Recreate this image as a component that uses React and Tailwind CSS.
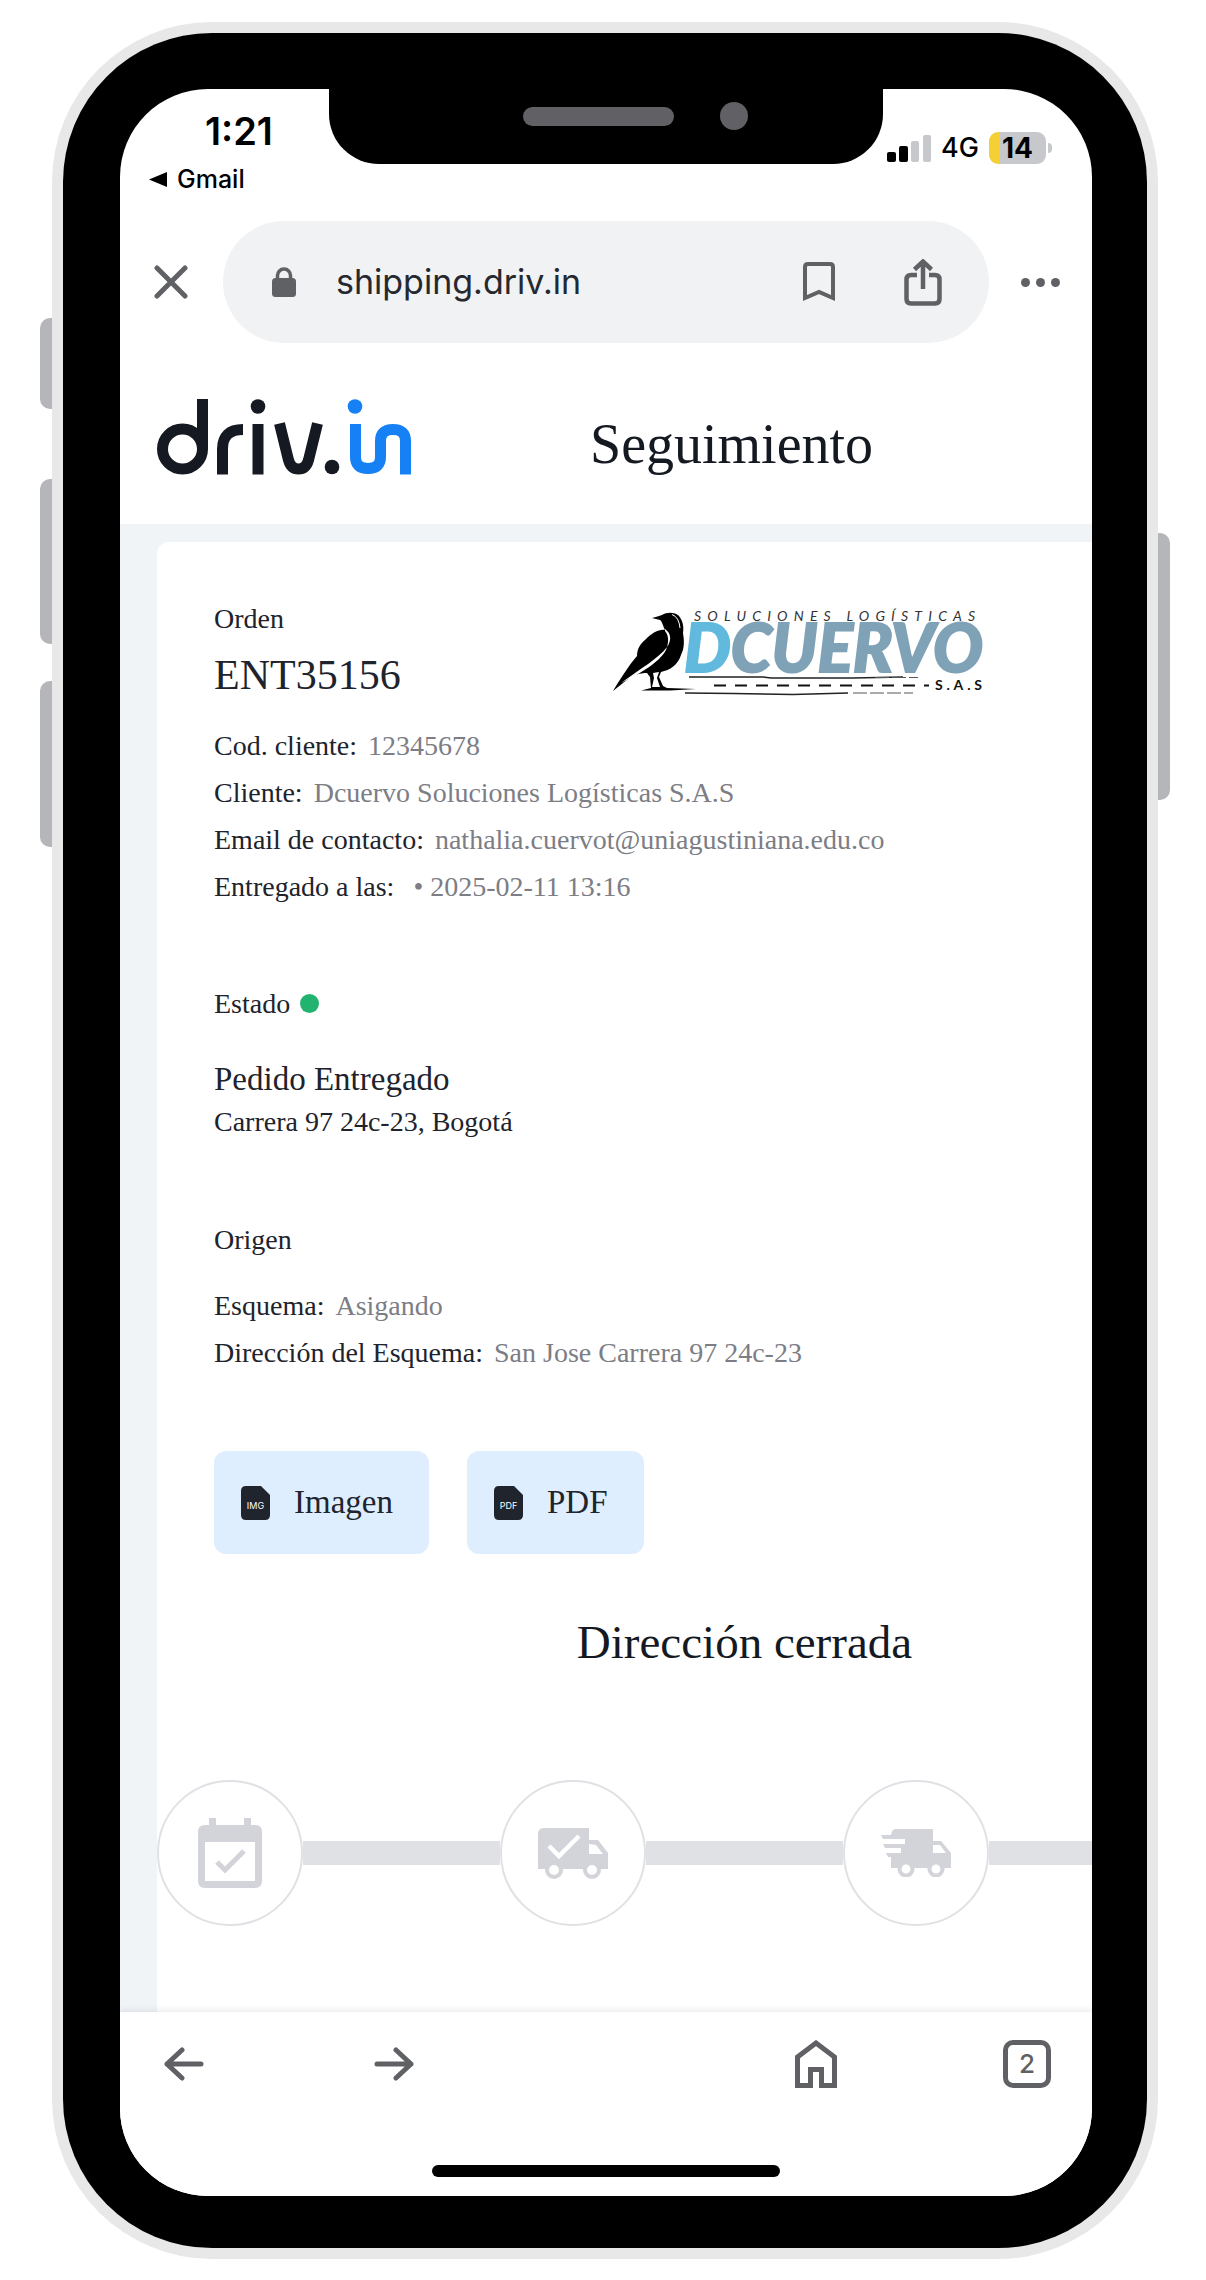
const dark = '#151922';

function BrandLogo() {
  return (
    <svg viewBox="0 0 254 76" className="h-[76px] w-[254px] shrink-0" role="img" aria-label="driv.in" fill="none">
      <g stroke={dark} strokeWidth="11">
        <circle cx="25.5" cy="50" r="20" />
        <path d="M45.5 0V50" />
        <path d="M65.500 75.500V50Q65.500 30.500 86 30.500" />
        <path d="M101 25V75.500" />
        <path d="M122.500 24.500 131.500 61Q134 70 141.500 70T151.500 61L160.500 24.500" />
      </g>
      <circle cx="101" cy="7.500" r="7.300" fill={dark} />
      <circle cx="175" cy="68" r="7.300" fill={dark} />
      <circle cx="198" cy="7.500" r="7.300" fill="#1680f5" />
      <path d="M198.500 25V58Q198.500 69.500 211 69.500T223.500 58V42Q223.500 30.500 236 30.500T248.500 42V75.500" stroke="#1680f5" strokeWidth="11" />
    </svg>
  );
}

function ClientLogo() {
  return (
    <svg viewBox="0 -9 374 98" className="h-[98px] w-[374px] shrink-0 overflow-visible" role="img" aria-label="Soluciones Logísticas DCuervo S.A.S">
      <path
        d="M39 6C43 5 46 4 49 3C54 0 62 0 66 4C70 9 71 15 70 21C71 28 72 35 68 43C65 53 57 58 48 60L46 65L50 74L54 76L83 77L57 78.500H28L38 76L37 65L34 61C27 61 20 63 15 67L0 79C6 69 16 53 24 44C24 37 27 32 33 27C39 21 46 17 52 18C50 14 49 9 47 8Z"
        fill="#000"
      />
      <path d="M52 17C58 21 59 28 54 35C46 46 27 57 8 71C26 62 46 51 53 38C55 33 57 25 52 19Z" fill="#fff" />
      <path d="M40 61L41 66L39 75H47L44 66L46 60Z" fill="#fff" />
      <path d="M59 2.500Q66 5 67 16" stroke="#fff" strokeWidth="1" fill="none" />
      <path d="M76 65H150L158 66H240L290 65M72 81L120 81.500L180 82.500L235 81" stroke="#222" strokeWidth="1.500" fill="none" />
      <path d="M240 81H300M262 65.500H305" stroke="#555" strokeWidth="1" strokeDasharray="14 3" fill="none" />
      <path d="M101 73.500H316" stroke="#111" strokeWidth="2" strokeDasharray="12 9" fill="none" />
      <text x="81" y="9" fontSize="14" fontStyle="italic" letterSpacing="6.200" fill="#333" fontFamily="Lato, sans-serif">SOLUCIONES LOGÍSTICAS</text>
      <text x="71" y="60" fontSize="66" fontWeight="900" fontStyle="italic" fill="#7fa2b7" stroke="#7fa2b7" strokeWidth="2" fontFamily="Lato, sans-serif"><tspan fill="#62b9de" stroke="#62b9de">D</tspan>CUERVO</text>
      <text x="322" y="78" fontSize="14" fontWeight="700" letterSpacing="3.800" fill="#111" fontFamily="Lato, sans-serif">S.A.S</text>
    </svg>
  );
}

function FileIcon({ label }) {
  return (
    <svg viewBox="0 0 29 34" className="h-[34px] w-[29px] shrink-0" aria-hidden="true">
      <path d="M5 0H20L29 9V29Q29 34 24 34H5Q0 34 0 29V5Q0 0 5 0Z" fill="#20242d" />
      <text x="14.500" y="22.500" textAnchor="middle" fontSize="9" fill="#fff" fontFamily="Inter, sans-serif">{label}</text>
    </svg>
  );
}

function CalendarIcon() {
  return (
    <svg viewBox="0 0 64 70" className="h-[70px] w-16" aria-hidden="true">
      <path fillRule="evenodd" fill="#d3d4d9" d="M11 0H18V7H46V0H53V7H57Q64 7 64 14V63Q64 70 57 70H7Q0 70 0 63V14Q0 7 7 7H11ZM7 24V63H57V24Z" />
      <path d="M19 44L27 52L46 33" fill="none" stroke="#d3d4d9" strokeWidth="5" />
    </svg>
  );
}

function TruckCheckIcon() {
  return (
    <svg viewBox="0 0 70 51" className="h-[51px] w-[70px]" aria-hidden="true">
      <path fillRule="evenodd" fill="#d3d4d9" d="M6 0H51V12H60L70 25V41H0V6Q0 0 6 0ZM51 16V26H65L58 17Z" />
      <path d="M11 18L21 28L41 8" fill="none" stroke="#fff" strokeWidth="4.500" />
      <circle cx="16" cy="42" r="7" fill="#fff" stroke="#d3d4d9" strokeWidth="4" />
      <circle cx="54" cy="42" r="7" fill="#fff" stroke="#d3d4d9" strokeWidth="4" />
    </svg>
  );
}

function TruckFastIcon() {
  return (
    <svg viewBox="0 0 70 48" className="h-12 w-[70px]" aria-hidden="true">
      <path fillRule="evenodd" fill="#d3d4d9" d="M14 0H52V12H60L70 24V39H10V28H7L5 24H20V19H4L2 15H24V10H2L0 6H10Q11 0 14 0ZM52 16V24H65L59 16Z" />
      <circle cx="25" cy="40" r="6.500" fill="#fff" stroke="#d3d4d9" strokeWidth="4" />
      <circle cx="55" cy="40" r="6.500" fill="#fff" stroke="#d3d4d9" strokeWidth="4" />
    </svg>
  );
}

function StatusBar() {
  return (
    <div className="flex h-[132px] items-start justify-between pl-[29px] pr-10 text-black">
      <div className="flex flex-col pt-[22px]">
        <span className="pl-14 text-[38px] leading-10 font-semibold">1:21</span>
        <button type="button" className="mt-3 flex items-center gap-2.5 text-left text-[25px] leading-8 font-medium">
          <svg viewBox="0 0 18 15" className="h-[15px] w-[18px]" aria-hidden="true"><path d="M0 7.500 18 0V15Z" /></svg>
          Gmail
        </button>
      </div>
      <div className="flex items-center gap-2.5 pt-[43px]">
        <svg viewBox="0 0 44 27" className="h-[27px] w-11" aria-hidden="true">
          <rect x="0" y="17" width="9" height="10" rx="2" />
          <rect x="12" y="11" width="9" height="16" rx="2" />
          <rect x="24" y="6" width="8" height="21" rx="2" fill="#c7c8cc" />
          <rect x="36" y="0" width="8" height="27" rx="2" fill="#c7c8cc" />
        </svg>
        <span className="text-[27px] leading-8 font-medium">4G</span>
        <div className="flex items-center gap-0.5">
          <div className="flex h-8 w-[57px] items-center justify-center overflow-hidden rounded-[9px] bg-linear-to-r from-[#f5cf36] from-18% to-[#c7c8cc] to-18% text-[28px] leading-8 font-bold">14</div>
          <div className="h-2.5 w-1 rounded-r-full bg-[#c7c8cc]" />
        </div>
      </div>
    </div>
  );
}

function BrowserBar() {
  return (
    <div className="flex h-[122px] items-center gap-8 pr-8 pl-[34px] text-[#606165]">
      <button type="button" aria-label="Cerrar" className="shrink-0">
        <svg viewBox="0 0 34 34" className="size-[34px]" fill="none" stroke="currentColor" strokeWidth="5" strokeLinecap="round"><path d="M3 3 31 31M31 3 3 31" /></svg>
      </button>
      <div className="ml-[3px] flex h-full min-w-0 flex-1 items-center rounded-full bg-[#f1f2f4] pr-[47px] pl-12">
        <svg viewBox="0 0 26 30" className="h-[30px] w-[26px] shrink-0" aria-hidden="true">
          <path d="M6.500 13V8.500a6.500 6.500 0 0 1 13 0V13" fill="none" stroke="currentColor" strokeWidth="3.500" />
          <rect x="1" y="11" width="24" height="19" rx="3.500" fill="currentColor" />
        </svg>
        <input type="text" aria-label="Dirección" readOnly value="shipping.driv.in" className="ml-[39px] min-w-0 flex-1 bg-transparent text-[34px] leading-10 text-[#26282f] outline-none" />
        <button type="button" aria-label="Guardar marcador" className="mr-[69px] shrink-0">
          <svg viewBox="0 0 32 40" className="h-10 w-8" fill="none" stroke="currentColor" strokeWidth="4"><path d="M2 36V5Q2 2 5 2H27Q30 2 30 5V36L16 30Z" /></svg>
        </button>
        <button type="button" aria-label="Compartir" className="shrink-0">
          <svg viewBox="0 0 38 47" className="h-[47px] w-[38px]" fill="none" stroke="currentColor" strokeWidth="4.500"><path d="M13 16H7Q2.500 16 2.500 20.500V40Q2.500 44.500 7 44.500H31Q35.500 44.500 35.500 40V20.500Q35.500 16 31 16H25M19 30V3M10.500 10.500 19 2.500 27.500 10.500" /></svg>
        </button>
      </div>
      <button type="button" aria-label="Más opciones" className="flex shrink-0 gap-1.5">
        <span className="size-[9px] rounded-full bg-current" />
        <span className="size-[9px] rounded-full bg-current" />
        <span className="size-[9px] rounded-full bg-current" />
      </button>
    </div>
  );
}

function Field({ label, children }) {
  return (
    <div className="flex gap-[11px] whitespace-nowrap">
      <dt>{label}</dt>
      <dd className="text-[#7c7d85]">{children}</dd>
    </div>
  );
}

function FileButton({ icon, children }) {
  return (
    <button type="button" className="flex h-[103px] items-center gap-6 rounded-xl bg-[#dfeefe] pr-9 pl-[27px] text-[33px] text-[#20242d]">
      <FileIcon label={icon} />
      {children}
    </button>
  );
}

function Step({ label, children }) {
  return (
    <li className="flex shrink-0 items-center">
      <div role="img" aria-label={label} className="flex size-[146px] items-center justify-center rounded-full border-2 border-[#e0e1e5] bg-white">{children}</div>
      <div className="h-6 w-[197px] bg-[#e0e1e5]" />
    </li>
  );
}

function OrderCard() {
  return (
    <div className="min-w-0 flex-1 rounded-tl-xl bg-white">
      <section className="px-[57px] pt-[61px] text-[28px] leading-[47px] text-[#20232c]">
        <div className="flex h-24 justify-between pr-12">
          <div>
            <h2 className="leading-8">Orden</h2>
            <p className="mt-4 text-[42px] leading-12">ENT35156</p>
          </div>
          <ClientLogo />
        </div>
        <dl className="mt-[23px]">
          <Field label="Cod. cliente:">12345678</Field>
          <Field label="Cliente:">Dcuervo Soluciones Logísticas S.A.S</Field>
          <Field label="Email de contacto:">nathalia.cuervot@uniagustiniana.edu.co</Field>
          <Field label="Entregado a las:"><span className="pl-2">• 2025-02-11 13:16</span></Field>
        </dl>

        <h3 className="mt-[70px] flex items-center gap-2.5">
          Estado
          <span className="size-[19px] rounded-full bg-[#23b371]" />
        </h3>
        <p className="mt-7 text-[33px] leading-12">Pedido Entregado</p>
        <p className="leading-[38px]">Carrera 97 24c-23, Bogotá</p>

        <h3 className="mt-[75px]">Origen</h3>
        <dl className="mt-[19px]">
          <Field label="Esquema:">Asigando</Field>
          <Field label="Dirección del Esquema:">San Jose Carrera 97 24c-23</Field>
        </dl>

        <div className="mt-[75px] flex gap-[38px]">
          <FileButton icon="IMG">Imagen</FileButton>
          <FileButton icon="PDF">PDF</FileButton>
        </div>
      </section>

      <h2 className="mt-[60px] pl-60 text-center text-[47px] leading-14 text-[#151922]">Dirección cerrada</h2>

      <ol className="mt-[110px] flex overflow-hidden">
        <Step label="Programado"><CalendarIcon /></Step>
        <Step label="Asignado"><TruckCheckIcon /></Step>
        <Step label="En camino"><TruckFastIcon /></Step>
      </ol>
    </div>
  );
}

function BottomBar() {
  return (
    <footer className="relative bg-white shadow-[0_-3px_5px_rgba(20,30,50,0.07)]">
      <nav className="flex items-center pt-7 pr-[41px] pl-11 text-[#606165]" aria-label="Navegador">
        <button type="button" aria-label="Atrás">
          <svg viewBox="0 0 40 34" className="h-[34px] w-10" fill="none" stroke="currentColor" strokeWidth="5" strokeLinecap="round" strokeLinejoin="round"><path d="M37 17H3M18 3 3 17 18 31" /></svg>
        </button>
        <button type="button" aria-label="Adelante" className="ml-[170px]">
          <svg viewBox="0 0 40 34" className="h-[34px] w-10" fill="none" stroke="currentColor" strokeWidth="5" strokeLinecap="round" strokeLinejoin="round"><path d="M3 17H37M22 3 37 17 22 31" /></svg>
        </button>
        <button type="button" aria-label="Inicio" className="ml-auto">
          <svg viewBox="0 0 42 48" className="h-12 w-[42px]" fill="none" stroke="currentColor" strokeWidth="5"><path d="M2.500 45.500V17L21 3L39.500 17V45.500H26.500V29.500H15.500V45.500Z" /></svg>
        </button>
        <button type="button" aria-label="2 pestañas" className="ml-[166px] flex size-12 items-center justify-center rounded-[10px] border-[5px] border-current text-[26px] leading-8 font-medium">2</button>
      </nav>
      <div className="mx-auto mt-[77px] mb-[19px] h-3 w-[348px] rounded-full bg-black" />
    </footer>
  );
}

export default function App() {
  return (
    <div className="bg-white pt-[22px] pr-9 pb-[21px] pl-10 font-['Inter',sans-serif]">
      <div className="relative px-3">
        <div className="absolute top-[296px] left-0 h-[91px] w-3 rounded-l-[10px] bg-[#b5b6b9]" />
        <div className="absolute top-[457px] left-0 h-[165px] w-3 rounded-l-[10px] bg-[#b5b6b9]" />
        <div className="absolute top-[659px] left-0 h-[166px] w-3 rounded-l-[10px] bg-[#b5b6b9]" />
        <div className="absolute top-[511px] right-0 h-[267px] w-3 rounded-r-[10px] bg-[#b5b6b9]" />

        <div className="rounded-[160px] bg-[#e8e8e8] p-[11px]">
          <div className="rounded-[149px] bg-black pt-14 pr-[55px] pb-[52px] pl-[57px]">
            <main className="relative flex min-h-[2107px] flex-col overflow-hidden rounded-[88px] bg-white">
              <div className="absolute top-0 left-1/2 flex h-[75px] w-[554px] -translate-x-1/2 items-start rounded-b-[50px] bg-black pt-[13px] pl-[194px]">
                <div className="mt-[5px] h-[19px] w-[151px] rounded-full bg-[#616165]" />
                <div className="ml-[46px] size-7 rounded-full bg-[#616165]" />
              </div>
              <StatusBar />
              <BrowserBar />
              <div className="flex flex-1 flex-col font-['Liberation_Serif',serif]">
                <header className="flex items-center pt-[49px] pb-[42px] pl-[37px]">
                  <BrandLogo />
                  <h1 className="mt-3.5 ml-[179px] text-[56px] leading-[76px] text-[#151922]">Seguimiento</h1>
                </header>
                <div className="flex flex-1 bg-[#f1f4f7] pt-[18px] pl-[37px]">
                  <OrderCard />
                </div>
              </div>
              <BottomBar />
            </main>
          </div>
        </div>
      </div>
    </div>
  );
}
